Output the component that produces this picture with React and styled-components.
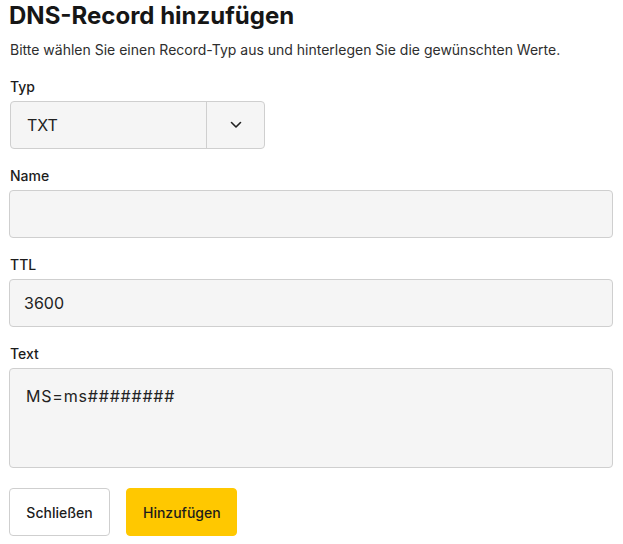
import React from 'react'
import styled, { createGlobalStyle } from 'styled-components'

const Global = createGlobalStyle`
  body {
    margin: 0;
    background: #fff;
    font-family: Inter, "Noto Sans", sans-serif;
    color: #1c1c1c;
  }
`

const Dialog = styled.div`
  padding: 0 10px 0 9px;
  display: flex;
  flex-direction: column;
`

const Title = styled.h1`
  margin: 0;
  font-size: 24px;
  line-height: 32px;
  font-weight: 700;
  color: #161616;
`

const Intro = styled.p`
  margin: 8px 0 0;
  font-size: 14px;
  line-height: 20px;
  color: #2e2e2e;
  padding-left: 1px;
`

const Field = styled.div`
  display: flex;
  flex-direction: column;
  gap: 4px;
  margin-top: 17px;
`

const Label = styled.label`
  font-size: 14px;
  line-height: 20px;
  font-weight: 500;
  color: #1c1c1c;
  padding-left: 1px;
`

const boxStyle = `
  box-sizing: border-box;
  background: #f5f5f5;
  border: 1px solid #cfcfcf;
  border-radius: 4px;
  font-family: Inter, "Noto Sans", sans-serif;
  font-size: 16px;
  color: #222;
`

const Input = styled.input`
  ${boxStyle}
  height: 48px;
  width: 100%;
  padding: 0 14px;
  outline: none;
`

const TextArea = styled.textarea`
  ${boxStyle}
  height: 100px;
  width: 100%;
  padding: 15px 16px;
  line-height: 24px;
  letter-spacing: 0.8px;
  resize: none;
  outline: none;
`

const Select = styled.div`
  ${boxStyle}
  height: 48px;
  width: 255px;
  display: flex;
  margin-left: 1px;
`

const SelectValue = styled.div`
  flex: 1;
  display: flex;
  align-items: center;
  padding-left: 16px;
  border-right: 1px solid #cfcfcf;
`

const SelectArrow = styled.div`
  width: 57px;
  display: flex;
  align-items: center;
  justify-content: center;
`

const Actions = styled.div`
  display: flex;
  gap: 16px;
  margin-top: 20px;
`

const Button = styled.button`
  box-sizing: border-box;
  height: 48px;
  padding: 0 16px;
  border-radius: 4px;
  font-family: Inter, "Noto Sans", sans-serif;
  font-size: 14px;
  font-weight: 500;
  color: #1c1c1c;
  border: 1px solid ${p => p.$primary ? '#ffc800' : '#cfcfcf'};
  background: ${p => p.$primary ? '#ffc800' : '#fff'};
  width: ${p => p.$w}px;
  cursor: pointer;
`

export default function App() {
  return (
    <>
      <Global />
      <Dialog>
        <Title>DNS-Record hinzufügen</Title>
        <Intro>Bitte wählen Sie einen Record-Typ aus und hinterlegen Sie die gewünschten Werte.</Intro>

        <Field>
          <Label>Typ</Label>
          <Select>
            <SelectValue>TXT</SelectValue>
            <SelectArrow>
              <svg width="12" height="8" viewBox="0 0 12 8" fill="none">
                <path d="M1.5 1.5 L6 6 L10.5 1.5" stroke="#222" strokeWidth="1.6" strokeLinecap="round" strokeLinejoin="round" />
              </svg>
            </SelectArrow>
          </Select>
        </Field>

        <Field>
          <Label>Name</Label>
          <Input defaultValue="" />
        </Field>

        <Field>
          <Label>TTL</Label>
          <Input defaultValue="3600" />
        </Field>

        <Field>
          <Label>Text</Label>
          <TextArea defaultValue="MS=ms########" />
        </Field>

        <Actions>
          <Button $w={101}>Schließen</Button>
          <Button $primary $w={111}>Hinzufügen</Button>
        </Actions>
      </Dialog>
    </>
  )
}
